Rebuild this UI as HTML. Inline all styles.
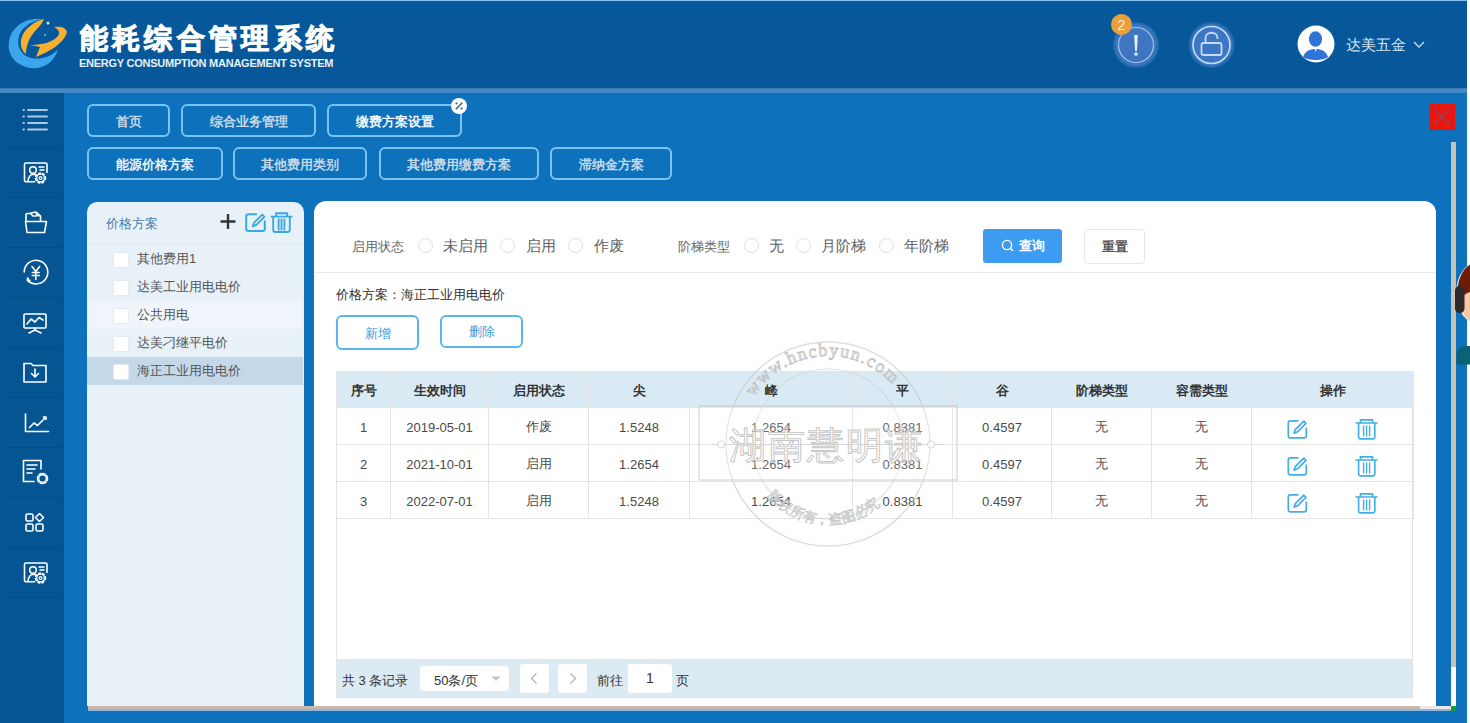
<!DOCTYPE html>
<html><head><meta charset="utf-8">
<style>
*{box-sizing:border-box;margin:0;padding:0}
html,body{width:1470px;height:723px;overflow:hidden;background:#fff;font-family:"Liberation Sans",sans-serif}
.abs{position:absolute}
#header{position:absolute;left:0;top:0;width:1467px;height:88px;background:#07579b;border-top:1px solid #86c0ee}
#stripe{position:absolute;left:0;top:88px;width:1467px;height:5px;background:#4388bf;border-top:1px solid #3a7db8}
#side{position:absolute;left:0;top:93px;width:64px;height:630px;background:#065593}
#main{position:absolute;left:64px;top:93px;width:1403px;height:630px;background:#0d71bb}
.tab{position:absolute;height:33px;border:2px solid #7cc3f3;border-radius:6px;color:#c3d8e8;font-size:13px;font-weight:bold;text-align:center;line-height:31px}
.sep{position:absolute;left:6px;width:56px;height:1px;background:#044a84}
.cbrow{position:absolute;left:0;white-space:nowrap;font-size:13px;color:#555;padding-left:24px;line-height:14px}
.cbrow:before{content:"";position:absolute;left:0;top:0;width:14px;height:14px;background:#fff;border:1px solid #e6ebef;border-radius:2px}
.lbl{position:absolute;font-size:13px;color:#666;white-space:nowrap}
.opt{position:absolute;top:237px;font-size:15px;color:#606266;white-space:nowrap}
.radio{position:absolute;top:238px;width:15px;height:15px;border:1px solid #dcdfe6;border-radius:50%;background:#fff}
.tbl{border-collapse:collapse;table-layout:fixed;width:1077px}
.tbl td{border:1px solid #e4e4e4;height:37px;text-align:center;font-size:13px;color:#4a4a4a;padding:2px 0 0 0;white-space:nowrap}
.tbl tr.th td{background:#d9eaf4;color:#333;font-weight:bold;height:36px}
.pg{font-size:13px;color:#333;white-space:nowrap;margin-top:1px}
.ico{position:absolute;left:22px;width:26px;height:26px}
</style></head><body>
<div id="header"></div>
<!-- logo -->
<svg class="abs" style="left:0;top:10px" width="80" height="70" viewBox="0 10 80 70">
  <path d="M42 19.5 C28 17 11 25 8.8 43 C7 60 24 71 40 67.5 C50 65 56 57 57.5 50 C50 57 41 60 31 58 C21 55.5 16 46 19 36 C22 27 31 21 42 19.5Z" fill="#3ba6ee"/>
  <path d="M44 19 C35 21 23 29 21 40 C20 47 23 52 26 54 C26 46 29 37 37 29 C40 26 43 22 44 19Z" fill="#f5b02f"/>
  <path d="M30 45 L40 47 L36 57 C48 52 64 44 67 32 C66 27 60 26 54 27 C60 30 61 34 56 38 C50 43 40 45 30 45Z" fill="#f5b02f"/>
  <circle cx="48" cy="23" r="1.5" fill="#d8e8f5"/>
  <circle cx="45" cy="35" r="1" fill="#8fb8e0"/>
</svg>
<div class="abs" style="left:79.5px;top:20px;font-size:28px;font-weight:bold;color:#fff;letter-spacing:4.4px;-webkit-text-stroke:1px #fff;white-space:nowrap">能耗综合管理系统</div>
<div class="abs" style="left:79px;top:57px;font-size:11px;font-weight:bold;color:#e8f0f8;white-space:nowrap;letter-spacing:-0.25px">ENERGY CONSUMPTION MANAGEMENT SYSTEM</div>
<!-- alert -->
<svg class="abs" style="left:1100px;top:5px" width="160" height="75">
  <defs><radialGradient id="gl"><stop offset="0.6" stop-color="#5a90d6" stop-opacity="0.9"/><stop offset="0.85" stop-color="#4f86cf" stop-opacity="0.6"/><stop offset="1" stop-color="#4a86d0" stop-opacity="0"/></radialGradient></defs>
  <circle cx="36" cy="40" r="23" fill="#5a8fd4" fill-opacity="0.35"/><circle cx="36" cy="40" r="21" fill="#5a8fd4" fill-opacity="0.4"/>
  <circle cx="36" cy="40" r="17.5" fill="#3f76c2" stroke="#a4c4ea" stroke-width="1.2"/>
  <path d="M34.2 30 L37.8 30 L36.9 46 L35.1 46Z" fill="#e8f0fa"/>
  <circle cx="36" cy="49" r="1.8" fill="#e8f0fa"/>
  <circle cx="21.5" cy="19.5" r="10.5" fill="#eaa03a"/>
  <text x="21.5" y="24.5" font-size="14" fill="#f8ecd8" text-anchor="middle" font-family="Liberation Sans">2</text>
  <circle cx="111.5" cy="40" r="23" fill="#5a8fd4" fill-opacity="0.35"/><circle cx="111.5" cy="40" r="21" fill="#5a8fd4" fill-opacity="0.4"/>
  <circle cx="111.5" cy="40" r="18.5" fill="#3d76c4" stroke="#c8dcf5" stroke-width="1.6"/>
  <rect x="101.5" y="38" width="20" height="12" rx="2" fill="none" stroke="#c8dcf5" stroke-width="1.8"/>
  <path d="M105.5 38 L105.5 33 C105.5 26 117.5 26 117.5 33 L117.5 34" fill="none" stroke="#c8dcf5" stroke-width="1.8"/>
</svg>
<!-- avatar -->
<svg class="abs" style="left:1296px;top:24px" width="40" height="40">
  <circle cx="20" cy="20" r="18.5" fill="#fff"/>
  <ellipse cx="19.5" cy="15" rx="6.6" ry="7.8" fill="#2f73d6"/>
  <path d="M7 33 C9 27 14 25 19.5 25 C25 25 30 27 32 33 C28 37 12 37 7 33Z" fill="#2f73d6"/>
  <path d="M18.5 25 L20.5 25 L20 28Z" fill="#fff"/>
</svg>
<div class="abs" style="left:1346px;top:36px;font-size:15px;color:#d4e6f6;white-space:nowrap">达美五金</div>
<svg class="abs" style="left:1412px;top:40px" width="14" height="10"><path d="M2 2 L7 7 L12 2" fill="none" stroke="#c8dcf0" stroke-width="1.4"/></svg>
<div id="stripe"></div>
<div id="side"></div>
<div class="sep" style="top:147px"></div><div class="sep" style="top:197px"></div><div class="sep" style="top:247px"></div><div class="sep" style="top:297px"></div><div class="sep" style="top:347px"></div><div class="sep" style="top:397px"></div><div class="sep" style="top:447px"></div><div class="sep" style="top:497px"></div><div class="sep" style="top:547px"></div><div class="sep" style="top:597px"></div>
<svg class="abs" style="left:0;top:93px" width="64" height="520" fill="none" stroke="#fff" stroke-width="1.6" stroke-linecap="round" stroke-linejoin="round">
  <!-- menu -->
  <g stroke="#a9c8e6" stroke-width="1.8"><path d="M28 17H47M28 23.5H47M28 30H47M28 36.5H47"/><path d="M23.5 17h.3M23.5 23.5h.3M23.5 30h.3M23.5 36.5h.3" stroke-width="2.2"/></g>
  <!-- user card gear -->
  <g transform="translate(0,50)">
    <path d="M34.5 38.8 H26 a1.5 1.5 0 0 1 -1.5 -1.5 V21.5 a1.5 1.5 0 0 1 1.5 -1.5 H45.5 a1.5 1.5 0 0 1 1.5 1.5 V29.5"/>
    <circle cx="33" cy="27" r="3.3"/><path d="M28 38 C28.5 33.5 30.5 31.5 33 31.2 C34 31.2 35 31.4 35.8 31.8"/>
    <path d="M39 24h5M40 27h4"/>
    <circle cx="40.5" cy="35" r="5" stroke-width="1.5" stroke-dasharray="2 2.2"/><circle cx="40.5" cy="35" r="3.8" stroke-width="1.3"/><circle cx="40.5" cy="35" r="1.4" stroke-width="1.2"/>
  </g>
  <!-- folder -->
  <g transform="translate(0,100)">
    <path d="M27 39.5 L25.5 28.5 H46.5 L44.5 39.5 Z"/>
    <path d="M26 28 V22 a1.5 1.5 0 0 1 1.5 -1.5 H30.5 L33 23 H36"/>
    <path d="M31 20 L36 19 L40.5 23 V28 M36 19 L37 22.5 L40.5 23"/>
  </g>
  <!-- yen cycle -->
  <g transform="translate(0,150)">
    <path d="M24.2 29 A11.8 11.8 0 1 1 27.6 37.4"/>
    <path d="M27.6 37.4 l0.2 -2.2 M27.6 37.4 l2.2 0.1" stroke-width="2"/>
    <path d="M32 23.5 L35.8 28.5 L39.6 23.5 M35.8 28.5 V36.5 M32.3 29.5 H39.3 M32.3 32.5 H39.3"/>
  </g>
  <!-- presentation -->
  <g transform="translate(0,200)">
    <rect x="24" y="21" width="22" height="14" rx="1"/>
    <path d="M27 31 L31 26 L35 29 L39 24.5 L43 27"/>
    <path d="M35 35 V37 M29 40 L35 37 L41 40"/>
  </g>
  <!-- folder download -->
  <g transform="translate(0,250)">
    <path d="M24 20.5 H31 L33 22.5 H46 V39 H24 Z"/>
    <path d="M35 26 V34 M31.5 30.5 L35 34 L38.5 30.5"/>
  </g>
  <!-- line chart -->
  <g transform="translate(0,300)">
    <path d="M25.5 21 V38.5 H48.5"/>
    <path d="M29.5 34.5 L34 30 L37.5 32.5 L46 24 M43.5 24 H46 V26.5"/>
  </g>
  <!-- doc gear -->
  <g transform="translate(0,350)">
    <path d="M34 38.5 H23.5 V17.5 H41 V26"/>
    <path d="M27 22h10M27 26h8M27 30h5"/>
    <circle cx="42.5" cy="35.5" r="5" stroke-width="1.6" stroke-dasharray="2.2 1.7"/><circle cx="42.5" cy="35.5" r="3.8" stroke-width="1.4"/>
  </g>
  <!-- apps -->
  <g transform="translate(0,400)">
    <rect x="26" y="21" width="7" height="7" rx="1.5"/><rect x="26" y="31" width="7" height="7" rx="1.5"/><rect x="36" y="31" width="7" height="7" rx="1.5"/>
    <path d="M39.5 20.5 L43.5 24.5 L39.5 28.5 L35.5 24.5 Z"/>
  </g>
  <!-- user card gear 2 -->
  <g transform="translate(0,450)">
    <path d="M34.5 38.8 H26 a1.5 1.5 0 0 1 -1.5 -1.5 V21.5 a1.5 1.5 0 0 1 1.5 -1.5 H45.5 a1.5 1.5 0 0 1 1.5 1.5 V29.5"/>
    <circle cx="33" cy="27" r="3.3"/><path d="M28 38 C28.5 33.5 30.5 31.5 33 31.2 C34 31.2 35 31.4 35.8 31.8"/>
    <path d="M39 24h5M40 27h4"/>
    <circle cx="40.5" cy="35" r="5" stroke-width="1.5" stroke-dasharray="2 2.2"/><circle cx="40.5" cy="35" r="3.8" stroke-width="1.3"/><circle cx="40.5" cy="35" r="1.4" stroke-width="1.2"/>
  </g>
</svg>
<div id="main"></div>

<!-- tabs row 1 -->
<div class="tab" style="left:87px;top:104px;width:83px">首页</div>
<div class="tab" style="left:181px;top:104px;width:135px">综合业务管理</div>
<div class="tab" style="left:327px;top:104px;width:135px;color:#f0f6fb">缴费方案设置</div>
<!-- tabs row 2 -->
<div class="tab" style="left:87px;top:147px;width:136px;color:#e8f1f8">能源价格方案</div>
<div class="tab" style="left:233px;top:147px;width:134px">其他费用类别</div>
<div class="tab" style="left:379px;top:147px;width:160px">其他费用缴费方案</div>
<div class="tab" style="left:550px;top:147px;width:122px">滞纳金方案</div>

<!-- close badge on tab -->
<svg class="abs" style="left:450px;top:97px" width="18" height="18"><circle cx="9" cy="9" r="8" fill="#fff"/><path d="M5.8 12.2 L12.2 5.8" stroke="#3d5f86" stroke-width="1.6"/><circle cx="6.5" cy="6.5" r="1.1" fill="#3d5f86"/><circle cx="11.5" cy="11.5" r="1.1" fill="#3d5f86"/></svg>
<!-- red close -->
<div class="abs" style="left:1429px;top:104px;width:26px;height:26px;background:#e8160f"></div>
<svg class="abs" style="left:1429px;top:104px" width="26" height="26"><path d="M5 5 L21 21 M21 5 L5 21" stroke="#8a4866" stroke-width="1.6" opacity="0.85"/></svg>
<!-- scrollbar -->
<div class="abs" style="left:1451px;top:142px;width:5px;height:564px;background:#fff"></div>
<div class="abs" style="left:1451px;top:142px;width:5px;height:525px;background:#c9c1ba"></div>
<div class="abs" style="left:1451px;top:706px;width:5px;height:5px;background:#1a9a2a"></div>
<div class="abs" style="left:1467px;top:0;width:3px;height:723px;background:#fff"></div>

<!-- left panel -->
<div class="abs" style="left:87px;top:202px;width:217px;height:504px;background:#e8f1f8;border-radius:10px 10px 0 0;overflow:hidden">
  <div class="abs" style="left:19px;top:13px;font-size:13px;color:#4a80b4">价格方案</div>
  <div class="abs" style="left:0;top:41px;width:216px;height:1px;background:#dde8f0"></div>
  <div class="abs" style="left:0;top:99px;width:216px;height:28px;background:#eff5fa"></div>
  <div class="abs" style="left:0;top:155px;width:216px;height:28px;background:#c5d8ea"></div>
</div>
<svg class="abs" style="left:216px;top:208px" width="84" height="30" fill="none">
  <path d="M12 6 V21 M4.5 13.5 H19.5" stroke="#333" stroke-width="2.4"/>
  <path d="M41 6.2 H32.5 a2.3 2.3 0 0 0 -2.3 2.3 V20.8 a2.3 2.3 0 0 0 2.3 2.3 H46.5 a2.3 2.3 0 0 0 2.3 -2.3 V12.5" stroke="#3aa9e2" stroke-width="2"/>
  <path d="M36.8 18.3 L38.2 14.6 L46.2 6.6 L48.4 8.8 L40.4 16.8 Z" stroke="#3aa9e2" stroke-width="1.9" stroke-linejoin="round"/>
  <path d="M54.6 8.6 H76.4 M60.2 8.6 V5.2 H71.2 V8.6 M57.2 8.8 V21.8 a2.2 2.2 0 0 0 2.2 2.2 H71.6 a2.2 2.2 0 0 0 2.2 -2.2 V8.8 M62.6 10.5 V22.5 M65.5 10.5 V22.5 M68.4 10.5 V22.5" stroke="#3aa9e2" stroke-width="1.9"/>
</svg>
<div class="abs" style="left:113px;top:252px">
  <div class="cbrow" style="top:0">其他费用1</div>
  <div class="cbrow" style="top:28px">达美工业用电电价</div>
  <div class="cbrow" style="top:56px">公共用电</div>
  <div class="cbrow" style="top:84px">达美刁继平电价</div>
  <div class="cbrow" style="top:112px">海正工业用电电价</div>
</div>

<!-- main white panel -->
<div class="abs" style="left:314px;top:201px;width:1122px;height:505px;background:#fff;border-radius:12px 12px 0 0"></div>
<div class="abs" style="left:314px;top:272px;width:1122px;height:1px;background:#ebebeb"></div>
<!-- filters -->
<div class="lbl" style="left:352px;top:238px">启用状态</div>
<div class="radio" style="left:418px"></div><div class="opt" style="left:443px">未启用</div>
<div class="radio" style="left:500px"></div><div class="opt" style="left:526px">启用</div>
<div class="radio" style="left:568px"></div><div class="opt" style="left:594px">作废</div>
<div class="lbl" style="left:678px;top:238px">阶梯类型</div>
<div class="radio" style="left:744px"></div><div class="opt" style="left:769px">无</div>
<div class="radio" style="left:796px"></div><div class="opt" style="left:821px">月阶梯</div>
<div class="radio" style="left:879px"></div><div class="opt" style="left:904px">年阶梯</div>
<div class="abs" style="left:983px;top:229px;width:79px;height:34px;background:#3d9cf2;border-radius:3px;color:#fff;font-size:13px;font-weight:bold;line-height:34px;text-align:center;white-space:nowrap">
 <svg width="13" height="13" style="vertical-align:-2px;margin-right:5px"><circle cx="6" cy="6" r="4.6" fill="none" stroke="#fff" stroke-width="1.4"/><path d="M9.3 9.3 L12 12" stroke="#fff" stroke-width="1.4"/></svg>查询</div>
<div class="abs" style="left:1084px;top:229px;width:61px;height:35px;background:#fff;border:1px solid #e6e6e6;border-radius:4px;color:#555;font-size:13px;font-weight:bold;line-height:33px;text-align:center">重置</div>
<!-- info -->
<div class="abs" style="left:336px;top:286px;font-size:13px;color:#333;white-space:nowrap">价格方案：海正工业用电电价</div>
<div class="abs" style="left:336px;top:315px;width:83px;height:35px;border:2px solid #5cb6ee;border-radius:6px;color:#3a9de0;font-size:13px;line-height:33px;text-align:center">新增</div>
<div class="abs" style="left:440px;top:315px;width:83px;height:33px;border:2px solid #5cb6ee;border-radius:6px;color:#3a9de0;font-size:13px;line-height:30px;text-align:center">删除</div>
<!-- table -->
<div class="abs" style="left:336px;top:371px;width:1077px;height:327px;border:1px solid #e4e4e4;background:#fff"></div>
<table class="abs tbl" style="left:336px;top:371px">
<colgroup><col style="width:54px"><col style="width:98px"><col style="width:100px"><col style="width:101px"><col style="width:163px"><col style="width:100px"><col style="width:99px"><col style="width:100px"><col style="width:100px"><col style="width:162px"></colgroup>
<tr class="th"><td>序号</td><td>生效时间</td><td>启用状态</td><td>尖</td><td>峰</td><td>平</td><td>谷</td><td>阶梯类型</td><td>容需类型</td><td>操作</td></tr>
<tr><td>1</td><td>2019-05-01</td><td>作废</td><td>1.5248</td><td>1.2654</td><td>0.8381</td><td>0.4597</td><td>无</td><td>无</td><td class="ops"></td></tr>
<tr><td>2</td><td>2021-10-01</td><td>启用</td><td>1.2654</td><td>1.2654</td><td>0.8381</td><td>0.4597</td><td>无</td><td>无</td><td class="ops"></td></tr>
<tr><td>3</td><td>2022-07-01</td><td>启用</td><td>1.5248</td><td>1.2654</td><td>0.8381</td><td>0.4597</td><td>无</td><td>无</td><td class="ops"></td></tr>
</table>
<svg class="abs" style="left:1286px;top:417px" width="24" height="24" fill="none" stroke="#42aee5" stroke-width="1.65" stroke-linejoin="round"><path d="M12.5 3.8 H4.3 a2 2 0 0 0 -2 2 V18.8 a2 2 0 0 0 2 2 H18.3 a2 2 0 0 0 2 -2 V10.5"/><path d="M8 16.2 L9.3 12.6 L17.8 4.1 L20 6.3 L11.5 14.8 Z"/></svg>
<svg class="abs" style="left:1354px;top:417px" width="24" height="24" fill="none" stroke="#42aee5" stroke-width="1.65"><path d="M1.5 6 H23.5 M6.5 6 V2.8 H18.5 V6 M4.6 6.2 V19.8 a2 2 0 0 0 2 2 H18.8 a2 2 0 0 0 2 -2 V6.2"/><path d="M9.6 8.5 V19.5 M12.6 8.5 V19.5 M15.6 8.5 V19.5" stroke-width="1.4"/></svg>
<svg class="abs" style="left:1286px;top:454px" width="24" height="24" fill="none" stroke="#42aee5" stroke-width="1.65" stroke-linejoin="round"><path d="M12.5 3.8 H4.3 a2 2 0 0 0 -2 2 V18.8 a2 2 0 0 0 2 2 H18.3 a2 2 0 0 0 2 -2 V10.5"/><path d="M8 16.2 L9.3 12.6 L17.8 4.1 L20 6.3 L11.5 14.8 Z"/></svg>
<svg class="abs" style="left:1354px;top:454px" width="24" height="24" fill="none" stroke="#42aee5" stroke-width="1.65"><path d="M1.5 6 H23.5 M6.5 6 V2.8 H18.5 V6 M4.6 6.2 V19.8 a2 2 0 0 0 2 2 H18.8 a2 2 0 0 0 2 -2 V6.2"/><path d="M9.6 8.5 V19.5 M12.6 8.5 V19.5 M15.6 8.5 V19.5" stroke-width="1.4"/></svg>
<svg class="abs" style="left:1286px;top:491px" width="24" height="24" fill="none" stroke="#42aee5" stroke-width="1.65" stroke-linejoin="round"><path d="M12.5 3.8 H4.3 a2 2 0 0 0 -2 2 V18.8 a2 2 0 0 0 2 2 H18.3 a2 2 0 0 0 2 -2 V10.5"/><path d="M8 16.2 L9.3 12.6 L17.8 4.1 L20 6.3 L11.5 14.8 Z"/></svg>
<svg class="abs" style="left:1354px;top:491px" width="24" height="24" fill="none" stroke="#42aee5" stroke-width="1.65"><path d="M1.5 6 H23.5 M6.5 6 V2.8 H18.5 V6 M4.6 6.2 V19.8 a2 2 0 0 0 2 2 H18.8 a2 2 0 0 0 2 -2 V6.2"/><path d="M9.6 8.5 V19.5 M12.6 8.5 V19.5 M15.6 8.5 V19.5" stroke-width="1.4"/></svg>

<!-- watermark -->
<svg class="abs" style="left:690px;top:335px" width="280" height="225" viewBox="690 335 280 225" fill="none">
  <g opacity="0.6">
  <circle cx="828" cy="444" r="102" stroke="#c8c8c8" stroke-width="1.5"/>
  <circle cx="828" cy="444" r="75" stroke="#d0d0d0" stroke-width="1.2"/>
  <rect x="699" y="406" width="258" height="74" stroke="#bdbdbd" stroke-width="1.3" fill="#fff" fill-opacity="0.3"/>
  <path d="M712 444.5 H945" stroke="#cfcfcf" stroke-width="1"/>
  <circle cx="721" cy="444.5" r="3.5" stroke="#bbb" stroke-width="1" fill="#fff"/>
  <circle cx="931" cy="444.5" r="3.5" stroke="#bbb" stroke-width="1" fill="#fff"/>
  </g>
  <defs><path id="arcTop" d="M740 444 A88 88 0 0 1 916 444"/><path id="arcBot" d="M758.7 484 A80 80 0 0 0 897.3 484"/></defs>
  <text font-family="Liberation Serif" font-size="18" fill="none" stroke="#c0c0c0" stroke-width="0.8" letter-spacing="1.5"><textPath href="#arcTop" startOffset="18%">www.hncbyun.com</textPath></text>
  <text font-size="14" fill="none" stroke="#c8c8c8" stroke-width="0.7"><textPath href="#arcBot" startOffset="9%">版权所有，盗图必究</textPath></text>
  <text x="826" y="458" text-anchor="middle" font-size="37" fill="#fff" fill-opacity="0.3" stroke="#c8c8c8" stroke-width="1" letter-spacing="2">湖南慧明谦</text>
</svg>
<!-- service avatar -->
<svg class="abs" style="left:1450px;top:255px" width="20" height="115">
  <ellipse cx="29" cy="38" rx="23" ry="31.5" fill="#e4e7ea"/>
  <ellipse cx="30" cy="50" rx="18" ry="19" fill="#f6c9a2"/>
  <path d="M7 42 C7 20 16 7 30 7 V36 C22 36 15 37 11 44 Z" fill="#6e1c06"/>
  <rect x="5" y="31" width="9.5" height="27" rx="4.5" fill="#2e2a2a"/>
  <path d="M6.6 109.5 V100 C6.6 94 10 91 16 91 H24 V109.5 Z" fill="#0a6275"/>
</svg>
<!-- pagination -->
<div class="abs" style="left:337px;top:659px;width:1075px;height:38px;background:#dceaf3"></div>
<div class="abs pg" style="left:342px;top:671px">共 3 条记录</div>
<div class="abs" style="left:420px;top:666px;width:89px;height:25px;background:#fff;border-radius:3px"></div>
<div class="abs pg" style="left:434px;top:671px">50条/页</div>
<svg class="abs" style="left:490px;top:675px" width="12" height="8"><path d="M1.5 1.5 L10.5 1.5 L6 6Z" fill="#c0c4cc"/></svg>
<div class="abs" style="left:520px;top:664px;width:29px;height:29px;background:#fff;border-radius:3px"></div>
<svg class="abs" style="left:520px;top:664px" width="29" height="29"><path d="M16.5 9.5 L11.5 14.5 L16.5 19.5" fill="none" stroke="#b0b4bb" stroke-width="1.3"/></svg>
<div class="abs" style="left:558px;top:664px;width:29px;height:29px;background:#fff;border-radius:3px"></div>
<svg class="abs" style="left:558px;top:664px" width="29" height="29"><path d="M12.5 9.5 L17.5 14.5 L12.5 19.5" fill="none" stroke="#b0b4bb" stroke-width="1.3"/></svg>
<div class="abs pg" style="left:597px;top:671px">前往</div>
<div class="abs" style="left:628px;top:664px;width:44px;height:29px;background:#fff;border-radius:3px;font-size:14px;color:#333;text-align:center;line-height:29px">1</div>
<div class="abs pg" style="left:676px;top:671px">页</div>
<!-- bottom bar -->
<div class="abs" style="left:88px;top:706px;width:1363px;height:3px;background:#c9b9ac"></div><div class="abs" style="left:88px;top:709px;width:1363px;height:2px;background:#8fb6dc"></div>
<div class="abs" style="left:1420px;top:706px;width:31px;height:3px;background:#e8e8e8"></div>

</body></html>
